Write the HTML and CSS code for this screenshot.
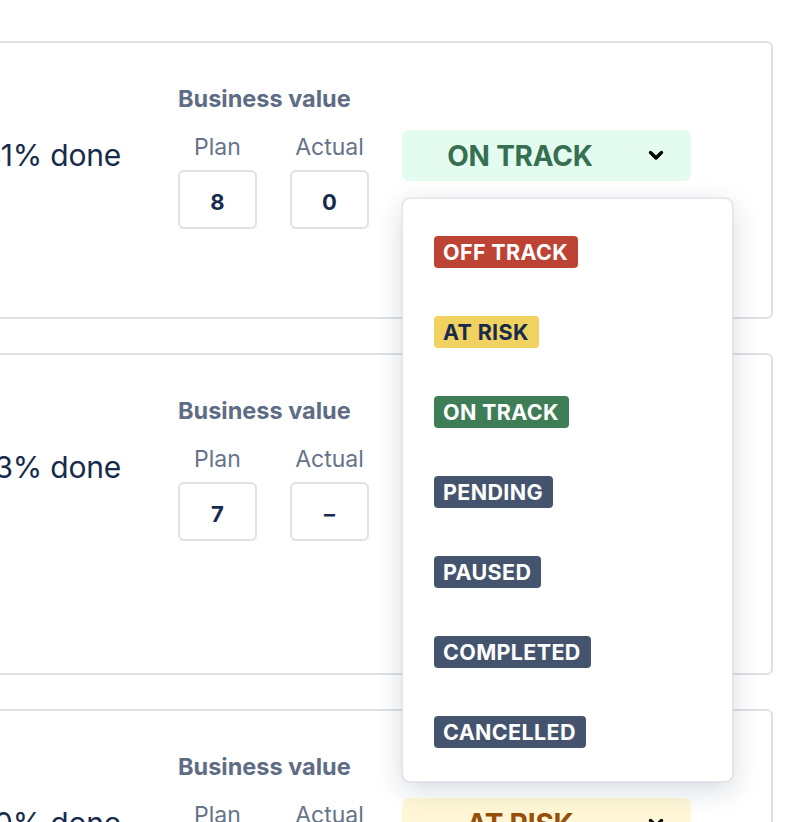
FILE: index.html
```html
<!DOCTYPE html>
<html lang="en">
<head>
<meta charset="UTF-8">
<meta name="viewport" content="width=device-width, initial-scale=1.0">
<title>Objectives</title>
<link rel="stylesheet" href="styles.css">
</head>
<body>
<main class="board">

  <section class="card card-short">
    <div class="card-main">
      <span class="progress">41% done</span>
    </div>
    <div class="value">
      <div class="value-title">Business value</div>
      <div class="value-fields">
        <div class="field">
          <span class="field-label">Plan</span>
          <span class="field-box">8</span>
        </div>
        <div class="field">
          <span class="field-label">Actual</span>
          <span class="field-box">0</span>
        </div>
      </div>
    </div>
    <div class="status">
      <button type="button" class="status-button on-track">
        <span class="status-text">ON TRACK</span>
        <svg class="chevron" width="16" height="11" viewBox="0 0 16 11"><path d="M2.5 2.5 L8 8 L13.5 2.5" fill="none" stroke="#000" stroke-width="3.4" stroke-linecap="round" stroke-linejoin="round"/></svg>
      </button>
      <ul class="status-menu">
        <li><span class="lozenge off-track">OFF TRACK</span></li>
        <li><span class="lozenge at-risk">AT RISK</span></li>
        <li><span class="lozenge on-track">ON TRACK</span></li>
        <li><span class="lozenge neutral">PENDING</span></li>
        <li><span class="lozenge neutral">PAUSED</span></li>
        <li><span class="lozenge neutral">COMPLETED</span></li>
        <li><span class="lozenge neutral">CANCELLED</span></li>
      </ul>
    </div>
  </section>

  <section class="card card-tall">
    <div class="card-main">
      <span class="progress">63% done</span>
    </div>
    <div class="value">
      <div class="value-title">Business value</div>
      <div class="value-fields">
        <div class="field">
          <span class="field-label">Plan</span>
          <span class="field-box">7</span>
        </div>
        <div class="field">
          <span class="field-label">Actual</span>
          <span class="field-box">–</span>
        </div>
      </div>
    </div>
    <div class="status">
      <button type="button" class="status-button pending">
        <span class="status-text">PENDING</span>
        <svg class="chevron" width="16" height="11" viewBox="0 0 16 11"><path d="M2.5 2.5 L8 8 L13.5 2.5" fill="none" stroke="#000" stroke-width="3.4" stroke-linecap="round" stroke-linejoin="round"/></svg>
      </button>
    </div>
  </section>

  <section class="card card-tall">
    <div class="card-main">
      <span class="progress">20% done</span>
    </div>
    <div class="value">
      <div class="value-title">Business value</div>
      <div class="value-fields">
        <div class="field">
          <span class="field-label">Plan</span>
          <span class="field-box">5</span>
        </div>
        <div class="field">
          <span class="field-label">Actual</span>
          <span class="field-box">–</span>
        </div>
      </div>
    </div>
    <div class="status">
      <button type="button" class="status-button at-risk">
        <span class="status-text">AT RISK</span>
        <svg class="chevron" width="16" height="11" viewBox="0 0 16 11"><path d="M2.5 2.5 L8 8 L13.5 2.5" fill="none" stroke="#000" stroke-width="3.4" stroke-linecap="round" stroke-linejoin="round"/></svg>
      </button>
    </div>
  </section>

</main>
</body>
</html>
```

FILE: styles.css
```css
  html, body {
    overflow: hidden;
  }
  body {
    margin: 0;
    background: #fff;
    font-family: Inter, "Noto Sans", Arial, sans-serif;
    color: #172b4d;
  }
  .board {
    display: flex;
    flex-direction: column;
    gap: 34px;
    padding-top: 41px;
    margin-left: -360px;
    width: 1133px;
  }
  .card {
    display: flex;
    align-items: flex-start;
    gap: 33px;
    padding: 42px 80px 0 0;
    border: 2px solid #dfe0e6;
    border-radius: 6px;
    background: #fff;
  }
  .card-short {
    height: 278px;
    box-sizing: border-box;
  }
  .card-tall {
    height: 322px;
    box-sizing: border-box;
  }
  .card-main {
    flex: 1;
    margin-right: 24px;
    padding-top: 52px;
    text-align: right;
  }
  .progress {
    font-size: 30px;
    line-height: 36px;
    letter-spacing: -0.2px;
  }

  /* business value */
  .value {
    width: 191px;
  }
  .value-title {
    font-size: 23.5px;
    line-height: 28px;
    font-weight: 700;
    color: #5e6c84;
  }
  .value-fields {
    display: flex;
    gap: 33px;
    margin-top: 20px;
  }
  .field {
    display: flex;
    flex-direction: column;
    align-items: center;
    width: 79px;
  }
  .field-label {
    font-size: 23px;
    line-height: 28px;
    color: #66738a;
  }
  .field-box {
    margin-top: 9px;
    width: 79px;
    height: 59px;
    box-sizing: border-box;
    padding-top: 1px;
    border: 2px solid #dfe1e6;
    border-radius: 6px;
    font-size: 22px;
    font-weight: 700;
    line-height: 58px;
    text-align: center;
  }

  /* status select */
  .status {
    position: relative;
    width: 289px;
    margin-top: 45px;
  }
  .status-button {
    display: flex;
    align-items: center;
    width: 100%;
    height: 51px;
    padding: 0 27px 0 16px;
    border: none;
    border-radius: 7px;
    font-family: inherit;
    cursor: pointer;
  }
  .status-text {
    flex: 1;
    text-align: center;
    font-size: 28px;
    font-weight: 700;
    letter-spacing: -0.2px;
  }
  .chevron {
    margin-left: 26px;
  }
  .status-button.on-track {
    background: #e3fcef;
    color: #376f51;
  }
  .status-button.at-risk {
    background: #fff7d6;
    color: #974f0c;
  }
  .status-button.pending {
    background: #ebecf0;
    color: #44546f;
  }

  .status-menu {
    position: absolute;
    z-index: 10;
    top: 68px;
    left: 0;
    width: 331px;
    box-sizing: border-box;
    margin: 0;
    padding: 13px 0 9px;
    list-style: none;
    background: #fff;
    border: 1px solid #e4e5ea;
    border-radius: 8px;
    box-shadow: 0 8px 28px rgba(9, 30, 66, 0.16), 0 0 2px rgba(9, 30, 66, 0.12);
  }
  .status-menu li {
    padding: 24px 31px;
    height: 32px;
  }
  .lozenge {
    display: inline-block;
    height: 32px;
    padding: 0 10px 0 9px;
    border-radius: 4px;
    font-size: 21.5px;
    font-weight: 700;
    line-height: 32px;
    color: #fff;
    letter-spacing: 0.35px;
  }
  .lozenge.off-track {
    background: #bd4334;
  }
  .lozenge.at-risk {
    background: #f1d160;
    color: #172b4d;
  }
  .lozenge.on-track {
    background: #3f7d57;
  }
  .lozenge.neutral {
    background: #44546f;
  }
```
